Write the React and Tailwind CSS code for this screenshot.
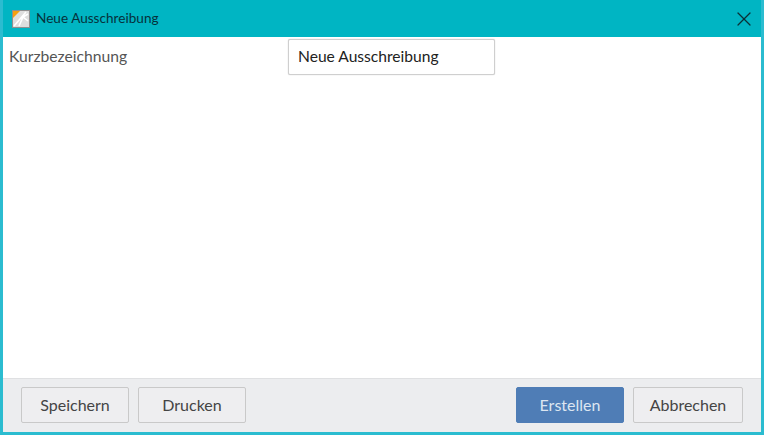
import React from 'react';
import { X } from 'lucide-react';

function Logo() {
  return (
    <svg width="18" height="18" viewBox="0 0 18 18" className="shrink-0">
      <rect x="0.5" y="0.5" width="17" height="17" fill="#dedede" stroke="#8f8f8f" />
      <path d="M1 1h7L1 8z" fill="#f5a010" />
      <path d="M2 16L14 2M7 16L11 7L16 4M11 7L16 11" stroke="#ffffff" strokeWidth="1.6" fill="none" />
    </svg>
  );
}

function FooterButton({ label, primary, wide }) {
  return (
    <button
      className={`h-[36px] ${wide ? 'w-[110px]' : 'w-[108px]'} rounded-[2px] border text-[16px] ${
        primary
          ? 'bg-[#4f7db6] border-[#4f7db6] text-[#dde6f1]'
          : 'bg-[#eeeef0] border-[#c9c9c9] text-[#444444]'
      }`}
    >
      {label}
    </button>
  );
}

export default function App() {
  return (
    <div className="w-[764px] h-[435px] flex flex-col bg-white border-x-[3px] border-b-[3px] border-[#2bbcd0] font-['Lato',sans-serif] overflow-hidden">
      {/* Title bar */}
      <div className="h-[37px] -mx-[3px] bg-[#00b5c3] flex items-center pl-[12px] pr-[8px] shrink-0">
        <Logo />
        <span className="ml-[6px] text-[13.6px] text-[#06323c]">Neue Ausschreibung</span>
        <X className="ml-auto w-[24px] h-[24px] text-[#0b2f36]" strokeWidth={1.2} />
      </div>

      {/* Form */}
      <div className="flex-1 flex items-start pt-[2px] pl-[6px]">
        <label className="w-[279px] h-[36px] flex items-center text-[15.7px] text-[#555555]">Kurzbezeichnung</label>
        <div className="w-[207px] h-[36px] flex items-center pl-[9px] bg-white border border-[#cfcfcf] rounded-[2px] shadow-[0_0_1px_#bbbbbb] text-[15.6px] text-[#222222]">
          Neue Ausschreibung
        </div>
      </div>

      {/* Footer */}
      <div className="h-[54px] shrink-0 bg-[#ecedef] border-t border-[#dfe0e2] flex items-center pb-[1px] pl-[18px] pr-[18px] gap-[9px]">
        <FooterButton label="Speichern" />
        <FooterButton label="Drucken" />
        <div className="ml-auto flex gap-[9px]">
          <FooterButton label="Erstellen" primary />
          <FooterButton label="Abbrechen" wide />
        </div>
      </div>
    </div>
  );
}
